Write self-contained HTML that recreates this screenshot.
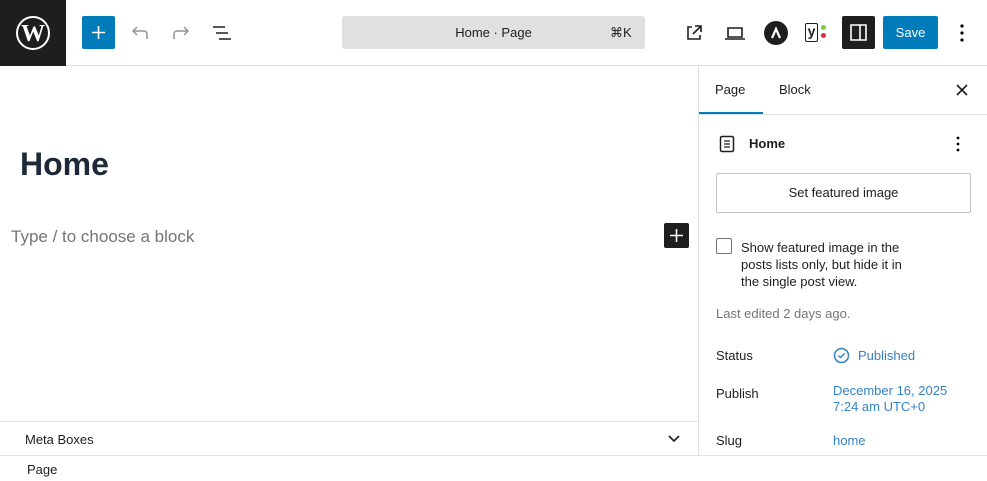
<!DOCTYPE html>
<html><head><meta charset="utf-8"><style>
*{box-sizing:border-box;margin:0;padding:0}
body{width:987px;height:481px;overflow:hidden;background:#fff;font-family:"Liberation Sans",sans-serif;color:#1e1e1e;position:relative;font-size:13px}
.a{position:absolute}
.top{left:0;top:0;width:987px;height:66px;border-bottom:1px solid #e0e0e0}
.blue{color:#3582c4}
</style></head><body>
<div class="a top"></div>
<div class="a" style="left:0;top:0;width:66px;height:66px;background:#1e1e1e"></div>
<svg class="a" style="left:15px;top:15px" width="36" height="36" viewBox="0 0 36 36"><circle cx="18" cy="18" r="16" fill="none" stroke="#fff" stroke-width="2"/><text x="18" y="26" text-anchor="middle" font-family="Liberation Serif" font-weight="bold" font-size="24" fill="#fff">W</text></svg>
<div class="a" style="left:82px;top:16px;width:33px;height:33px;background:#007cba;border-radius:2px"></div>
<svg class="a" style="left:90px;top:24px" width="17" height="17"><path d="M8.5 2v13M2 8.5h13" stroke="#fff" stroke-width="1.6"/></svg>
<svg class="a" style="left:130px;top:24px" width="20" height="18"><path d="M17 15V10a3 3 0 0 0-3-3H3M7 3L3 7l4 4" fill="none" stroke="#949494" stroke-width="1.5"/></svg>
<svg class="a" style="left:171px;top:24px" width="20" height="18"><path d="M3 15V10a3 3 0 0 1 3-3h11M13 3l4 4-4 4" fill="none" stroke="#949494" stroke-width="1.5"/></svg>
<svg class="a" style="left:212px;top:24px" width="22" height="18"><path d="M1 3h12M4 9h12M7 15h12" stroke="#1e1e1e" stroke-width="1.6"/></svg>
<div class="a" style="left:342px;top:16px;width:303px;height:33px;background:#e0e0e0;border-radius:3px"></div>
<div class="a" style="left:342px;top:25px;width:303px;text-align:center;font-size:13px">Home · Page</div>
<div class="a" style="left:610px;top:25px;font-size:13px">⌘K</div>
<svg class="a" style="left:684px;top:23px" width="20" height="20"><path d="M8 4H4v12h12v-4M11 3h6v6M17 3l-8 8" fill="none" stroke="#1e1e1e" stroke-width="1.6"/></svg>
<svg class="a" style="left:724px;top:24px" width="22" height="18"><path d="M4 4h14v9H4zM1 15h20" fill="none" stroke="#1e1e1e" stroke-width="1.6"/></svg>
<div class="a" style="left:764px;top:21px;width:24px;height:24px;border-radius:50%;background:#1e1e1e"></div>
<svg class="a" style="left:764px;top:21px" width="24" height="24"><path d="M8 17l4-9 4 9" fill="none" stroke="#fff" stroke-width="2.2"/></svg>
<div class="a" style="left:805px;top:23px;width:13px;height:19px;border:1.5px solid #1e1e1e;border-radius:2px;font-size:14px;line-height:15px;text-align:center;font-weight:bold">y</div>
<div class="a" style="left:821px;top:25px;width:5px;height:5px;border-radius:50%;background:#7ad03a"></div>
<div class="a" style="left:821px;top:33px;width:5px;height:5px;border-radius:50%;background:#dc3232"></div>
<div class="a" style="left:842px;top:16px;width:33px;height:33px;background:#1e1e1e;border-radius:2px"></div>
<svg class="a" style="left:849px;top:23px" width="19" height="19"><path d="M2 2h15v15H2zM11 2v15" fill="none" stroke="#fff" stroke-width="1.6"/></svg>
<div class="a" style="left:883px;top:16px;width:55px;height:33px;background:#007cba;border-radius:2px;color:#fff;text-align:center;line-height:33px;font-size:13px">Save</div>
<svg class="a" style="left:958px;top:22px" width="8" height="22"><circle cx="4" cy="4" r="1.6"/><circle cx="4" cy="11" r="1.6"/><circle cx="4" cy="18" r="1.6"/></svg>

<div class="a" style="left:698px;top:66px;width:1px;height:389px;background:#e0e0e0"></div>
<div class="a" style="left:20px;top:146px;font-size:32px;font-weight:bold;color:#1d2838">Home</div>
<div class="a" style="left:11px;top:227px;font-size:17px;color:#757575">Type / to choose a block</div>
<div class="a" style="left:664px;top:223px;width:25px;height:25px;background:#1e1e1e;border-radius:2px"></div>
<svg class="a" style="left:668px;top:227px" width="17" height="17"><path d="M8.5 2v13M2 8.5h13" stroke="#fff" stroke-width="1.6"/></svg>

<div class="a" style="left:0;top:421px;width:698px;height:1px;background:#e0e0e0"></div>
<div class="a" style="left:25px;top:432px;font-size:13px">Meta Boxes</div>
<svg class="a" style="left:667px;top:434px" width="14" height="10"><path d="M2 2l5 5 5-5" fill="none" stroke="#1e1e1e" stroke-width="1.6"/></svg>
<div class="a" style="left:0;top:455px;width:987px;height:1px;background:#e0e0e0"></div>
<div class="a" style="left:27px;top:462px;font-size:13px">Page</div>

<div class="a" style="left:699px;top:114px;width:288px;height:1px;background:#e0e0e0"></div>
<div class="a" style="left:699px;top:112px;width:64px;height:2px;background:#007cba"></div>
<div class="a" style="left:715px;top:82px;font-size:13px">Page</div>
<div class="a" style="left:779px;top:82px;font-size:13px">Block</div>
<svg class="a" style="left:955px;top:83px" width="14" height="14"><path d="M2 2l10 10M12 2L2 12" stroke="#1e1e1e" stroke-width="1.6"/></svg>
<svg class="a" style="left:719px;top:135px" width="16" height="18"><rect x="1.5" y="1.5" width="13" height="15" rx="1.5" fill="none" stroke="#1e1e1e" stroke-width="1.5"/><path d="M5 6h6M5 9h6M5 12h6" stroke="#1e1e1e" stroke-width="1.3"/></svg>
<div class="a" style="left:749px;top:136px;font-size:13px;font-weight:bold">Home</div>
<svg class="a" style="left:954px;top:134px" width="8" height="20"><circle cx="4" cy="4" r="1.4"/><circle cx="4" cy="10" r="1.4"/><circle cx="4" cy="16" r="1.4"/></svg>
<div class="a" style="left:716px;top:173px;width:255px;height:40px;border:1px solid #c3c4c7;border-radius:2px;text-align:center;line-height:38px;font-size:13px">Set featured image</div>
<div class="a" style="left:716px;top:238px;width:16px;height:16px;border:1px solid #757575;border-radius:2px"></div>
<div class="a" style="left:741px;top:239px;width:182px;font-size:13px;line-height:17px">Show featured image in the posts lists only, but hide it in the single post view.</div>
<div class="a" style="left:716px;top:306px;font-size:13px;color:#757575">Last edited 2 days ago.</div>
<div class="a" style="left:716px;top:348px">Status</div>
<svg class="a" style="left:833px;top:347px" width="17" height="17"><circle cx="8.5" cy="8.5" r="7" fill="none" stroke="#3582c4" stroke-width="1.5"/><path d="M5.5 8.5l2 2 4-4" fill="none" stroke="#3582c4" stroke-width="1.5"/></svg>
<div class="a blue" style="left:858px;top:348px">Published</div>
<div class="a" style="left:716px;top:386px">Publish</div>
<div class="a blue" style="left:833px;top:383px;line-height:16px">December 16, 2025<br>7:24 am UTC+0</div>
<div class="a" style="left:716px;top:433px">Slug</div>
<div class="a blue" style="left:833px;top:433px">home</div>
</body></html>
